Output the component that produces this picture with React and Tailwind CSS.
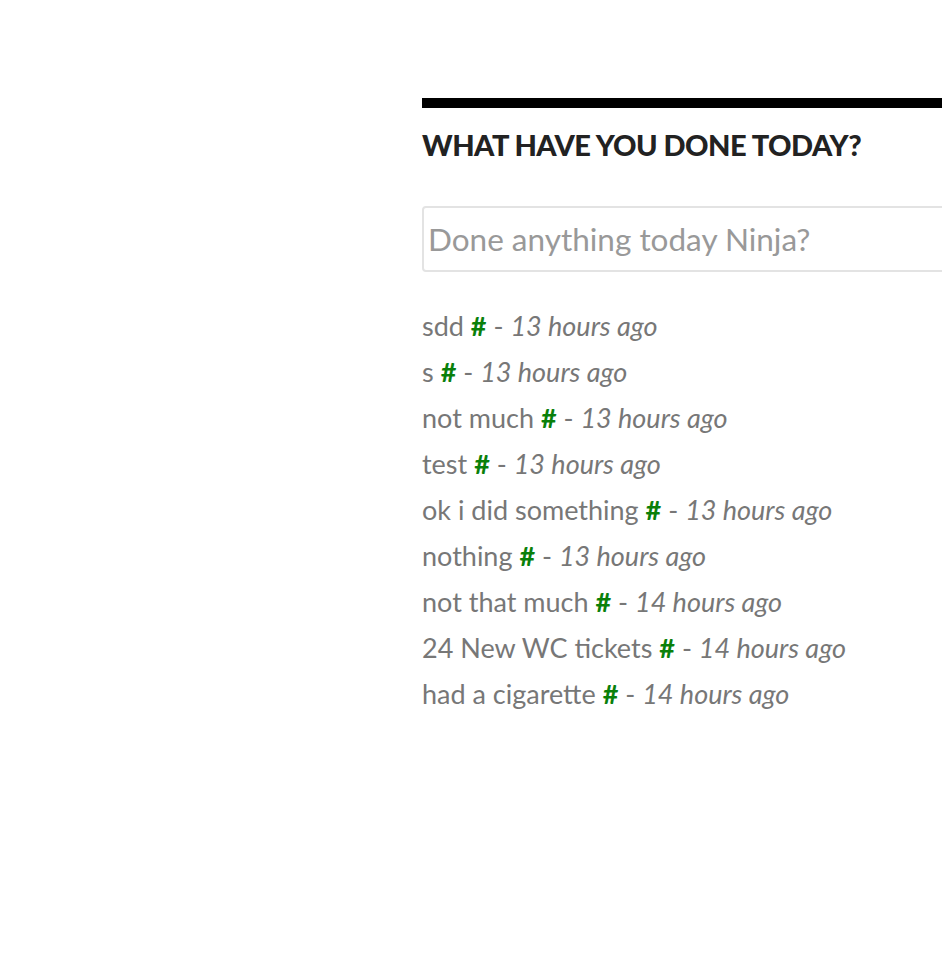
const ITEMS = [
  { text: "sdd", ago: "13 hours ago" },
  { text: "s", ago: "13 hours ago" },
  { text: "not much", ago: "13 hours ago" },
  { text: "test", ago: "13 hours ago" },
  { text: "ok i did something", ago: "13 hours ago" },
  { text: "nothing", ago: "13 hours ago" },
  { text: "not that much", ago: "14 hours ago" },
  { text: "24 New WC tickets", ago: "14 hours ago" },
  { text: "had a cigarette", ago: "14 hours ago" },
];

export default function App() {
  return (
    <div className="w-[942px] h-[968px] overflow-hidden bg-white font-['Lato',sans-serif]">
      <div className="pl-[422px] pt-[98px] w-[1400px]">
        <div className="w-[700px]">
          {/* top rule */}
          <div className="h-[10px] bg-black" />

          <h2 className="mt-[19px] text-[29px] leading-[36px] font-black uppercase tracking-[-0.5px] text-[#222]">
            What have you done today?
          </h2>

          <input
            type="text"
            placeholder="Done anything today Ninja?"
            className="mt-[43px] block w-full h-[66px] px-[4px] border-2 border-[#e3e3e3] rounded-[4px] text-[31.5px] text-[#555] placeholder:text-[#999] focus:outline-none"
          />

          {/* entries */}
          <ul className="mt-[31px] flex flex-col">
            {ITEMS.map((item, i) => (
              <li key={i} className="text-[27px] leading-[46px] text-[#777]">
                {item.text}{" "}
                <a href="#" className="font-bold text-[#0a800a]">#</a>
                {" - "}
                <em className="italic">{item.ago}</em>
              </li>
            ))}
          </ul>
        </div>
      </div>
    </div>
  );
}
